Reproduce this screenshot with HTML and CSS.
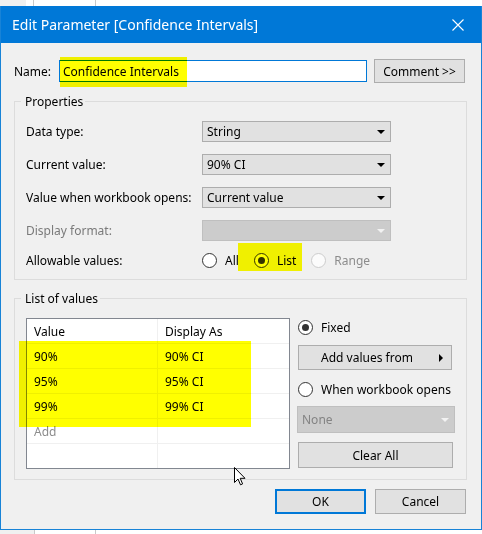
FILE: index.html
```html
<!DOCTYPE html>
<html>
<head>
<meta charset="utf-8">
<title>Edit Parameter</title>
<link rel="stylesheet" href="styles.css">
</head>
<body>
<div class="strip strip-top"><span class="s-gray"></span><span class="s-white s-short"></span><span class="s-line"></span><span class="s-white s-mid"></span><span class="s-line"></span><span class="s-white s-fill"></span></div>

<div class="dialog">
  <div class="titlebar">
    <span class="title">Edit Parameter [Confidence Intervals]</span>
    <svg class="close" width="12" height="12" viewBox="0 0 12 12"><path d="M0.5 0.5 L11.5 11.5 M11.5 0.5 L0.5 11.5" stroke="#ffffff" stroke-width="1.1" fill="none"/></svg>
  </div>

  <div class="content">
    <div class="name-row">
      <span class="name-label">Name:</span>
      <div class="textbox">Confidence Intervals</div>
      <button class="btn comment">Comment &gt;&gt;</button>
    </div>

    <fieldset class="group">
      <legend>Properties</legend>
      <div class="form-rows">
        <div class="form-row">
          <span class="lbl">Data type:</span>
          <div class="select"><span>String</span><i class="arrow"></i></div>
        </div>
        <div class="form-row">
          <span class="lbl">Current value:</span>
          <div class="select"><span>90% CI</span><i class="arrow"></i></div>
        </div>
        <div class="form-row">
          <span class="lbl">Value when workbook opens:</span>
          <div class="select"><span>Current value</span><i class="arrow"></i></div>
        </div>
        <div class="form-row">
          <span class="lbl disabled">Display format:</span>
          <div class="select disabled"><span></span><i class="arrow"></i></div>
        </div>
        <div class="form-row radio-row">
          <span class="lbl">Allowable values:</span>
          <div class="radio-group">
            <span class="radio"><i class="dot"></i><span>All</span></span>
            <span class="radio checked"><i class="dot"></i><span>List</span></span>
            <span class="radio disabled"><i class="dot"></i><span>Range</span></span>
          </div>
        </div>
      </div>
    </fieldset>

    <fieldset class="group list-group">
      <legend>List of values</legend>
      <div class="list-body">
        <div class="table">
          <div class="tr"><span class="td">Value</span><span class="td">Display As</span></div>
          <div class="tr"><span class="td">90%</span><span class="td">90% CI</span></div>
          <div class="tr"><span class="td">95%</span><span class="td">95% CI</span></div>
          <div class="tr"><span class="td">99%</span><span class="td">99% CI</span></div>
          <div class="tr"><span class="td add">Add</span><span class="td"></span></div>
          <div class="tr last"><span class="td"></span><span class="td"></span></div>
        </div>
        <div class="side">
          <span class="radio checked fixed"><i class="dot"></i><span>Fixed</span></span>
          <button class="btn add-values"><span>Add values from</span><i class="tri-right"></i></button>
          <span class="radio when"><i class="dot"></i><span>When workbook opens</span></span>
          <div class="select disabled none-select"><span>None</span><i class="arrow"></i></div>
          <button class="btn clear-all">Clear All</button>
        </div>
      </div>
    </fieldset>

    <div class="actions">
      <button class="btn ok">OK</button>
      <button class="btn cancel">Cancel</button>
    </div>
  </div>
</div>

<div class="strip strip-bottom"><span class="s-gray s-wide"></span><span class="s-line"></span><span class="s-white s-mid2"></span><span class="s-line"></span><span class="s-white s-fill"></span></div>

<div class="hl hl-name"></div>
<div class="hl hl-list"></div>
<div class="hl hl-table"></div>

<svg class="cursor" width="13" height="20" viewBox="0 0 13 20"><path d="M0.5 0.5 L0.5 15.5 L4 12 L6.5 17.8 L8.6 16.9 L6.2 11.3 L11 11.3 Z" fill="#ffffff" stroke="#000000" stroke-width="1"/></svg>
</body>
</html>
```
FILE: styles.css
```css
* { box-sizing: border-box; }

html, body { margin: 0; padding: 0; }

body {
  width: 482px;
  height: 534px;
  position: relative;
  overflow: hidden;
  background: #ffffff;
  font-family: "Noto Sans", "Open Sans", sans-serif;
  font-size: 12px;
  color: #000000;
}

/* background strips above and below the dialog */
.strip { display: flex; background: #ffffff; }
.strip-top { height: 6px; }
.strip-bottom { height: 4px; }
.s-gray { width: 26px; background: #f0f0f0; }
.s-gray.s-wide { width: 34px; }
.s-line { width: 1px; background: #c9c9c9; }
.s-short { width: 7px; }
.s-mid { width: 61px; }
.s-mid2 { width: 60px; }
.s-fill { flex: 1; }

/* dialog frame */
.dialog {
  width: 482px;
  border: 1px solid #1883d7;
  border-top: 0;
  background: #f0f0f0;
}

.titlebar {
  height: 37px;
  background: #0078d7;
  display: flex;
  align-items: center;
  justify-content: space-between;
  padding: 0 17px 0 11px;
}

.title {
  color: #ffffff;
  font-size: 14px;
  line-height: 20px;
  padding-top: 1px;
}

.close { display: block; }

.content {
  padding: 16px 14px 14px 13px;
  height: 486px;
}

/* name row */
.name-row {
  display: flex;
  align-items: center;
  height: 24px;
}

.name-label { width: 45px; }

.textbox {
  width: 308px;
  height: 22px;
  background: #ffffff;
  border: 1px solid #0078d7;
  padding-left: 3px;
  display: flex;
  align-items: center;
}

.btn {
  font-family: inherit;
  font-size: 12px;
  color: #000000;
  background: #e1e1e1;
  border: 1px solid #adadad;
  padding: 0;
  margin: 0;
  display: flex;
  align-items: center;
  justify-content: center;
}

.comment {
  width: 91px;
  height: 24px;
  margin-left: 7px;
}

/* group boxes */
.group {
  margin: 10px 0 0;
  padding: 11px 11px 8px;
  border: 1px solid #dcdcdc;
  min-width: 0;
}

.group legend {
  margin-left: -5px;
  padding: 0 2px 0 4px;
  line-height: 17px;
  font-size: 12px;
}

.list-group { padding-bottom: 10px; }

.form-rows {
  display: flex;
  flex-direction: column;
  gap: 12px;
}

.form-row {
  display: grid;
  grid-template-columns: 176px 189px;
  height: 21px;
  align-items: center;
}

.form-row.radio-row { margin-top: -3px; }

.lbl.disabled { color: #7a7a7a; }

/* select boxes */
.select {
  height: 21px;
  border: 1px solid #adadad;
  background: #e1e1e1;
  display: flex;
  align-items: center;
  padding-left: 4px;
}

.select .arrow {
  margin-left: auto;
  margin-right: 5px;
  width: 0;
  height: 0;
  border-left: 4px solid transparent;
  border-right: 4px solid transparent;
  border-top: 4px solid #000000;
}

.select.disabled {
  background: #cccccc;
  border-color: #bfbfbf;
  color: #838383;
}

.select.disabled .arrow { border-top-color: #f2f2f2; }

/* radios */
.radio-group {
  display: flex;
  align-items: center;
  gap: 15px;
}

.radio {
  display: flex;
  align-items: center;
  gap: 8px;
  height: 15px;
}

.radio .dot {
  width: 15px;
  height: 15px;
  border-radius: 50%;
  border: 1px solid #333333;
  background: #ffffff;
  display: flex;
  align-items: center;
  justify-content: center;
  flex: none;
}

.radio.checked .dot::after {
  content: "";
  width: 7px;
  height: 7px;
  border-radius: 50%;
  background: #333333;
}

.radio.disabled { color: #8c8c8c; }
.radio.disabled .dot { border-color: #cccccc; background: #fbfbfb; }

/* list of values */
.list-body {
  display: flex;
  gap: 8px;
}

.table {
  width: 264px;
  border: 1px solid #828790;
  background: #ffffff;
  flex: none;
}

.tr {
  display: grid;
  grid-template-columns: 131px 131px;
  height: 25px;
  border-bottom: 1px solid #f0f0f0;
}

.tr.last { height: 24px; border-bottom: 0; }

.td {
  display: flex;
  align-items: center;
  padding-left: 7px;
}

.td:first-child { border-right: 1px solid #f0f0f0; }

.td.add { color: #8c8c8c; }

.side {
  width: 156px;
  display: flex;
  flex-direction: column;
  align-items: flex-start;
}

.fixed { margin-top: 2px; }

.add-values {
  margin-top: 10px;
  width: 154px;
  height: 25px;
  padding-right: 16px;
  position: relative;
}

.tri-right {
  position: absolute;
  right: 8px;
  top: 8px;
  width: 0;
  height: 0;
  border-top: 4px solid transparent;
  border-bottom: 4px solid transparent;
  border-left: 4px solid #000000;
}

.when { margin-top: 12px; }

.none-select {
  margin-top: 9px;
  margin-left: -1px;
  width: 158px;
  height: 27px;
}

.clear-all {
  margin-top: 9px;
  width: 155px;
  height: 26px;
}

/* dialog buttons */
.actions {
  display: flex;
  justify-content: flex-end;
  gap: 9px;
  margin-top: 9px;
  padding-right: 1px;
}

.actions .btn { width: 91px; height: 25px; }
.actions .ok { border: 2px solid #0078d7; }

/* highlighter annotations */
.hl {
  position: absolute;
  background: #ffff00;
  mix-blend-mode: multiply;
}
.hl-name { left: 60px; top: 57px; width: 127px; height: 30px; }
.hl-list { left: 238px; top: 243px; width: 64px; height: 28px; }
.hl-table { left: 19px; top: 341px; width: 232px; height: 86px; }

.cursor {
  position: absolute;
  left: 234px;
  top: 467px;
}
```
